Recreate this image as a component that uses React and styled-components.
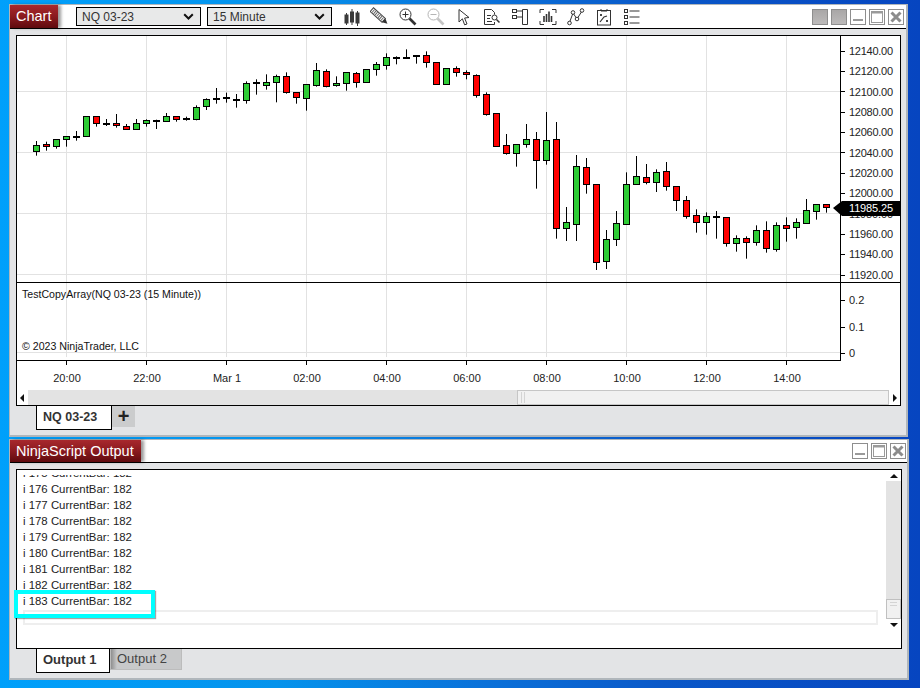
import React from "react";
import styled, { createGlobalStyle } from "styled-components";

const GlobalStyle = createGlobalStyle`
  html, body {
    margin: 0;
    padding: 0;
    width: 920px;
    height: 688px;
    overflow: hidden;
  }
  * { box-sizing: border-box; }
`;

const Desktop = styled.div`
  width: 920px;
  height: 688px;
  padding: 4px 12px 0 9px;
  display: flex;
  flex-direction: column;
  gap: 2px;
  font-family: "Liberation Sans", Arial, sans-serif;
  background: linear-gradient(90deg, #00a0fb 0%, #0593ec 30%, #0a72da 52%, #0a58c8 72%, #0645c0 100%);
`;

const Window = styled.div`
  height: ${(p) => p.$height}px;
  margin-right: ${(p) => p.$overhang || 0}px;
  border: 1px solid #b0b6bb;
  border-bottom-width: 2px;
  border-right-width: 2px;
  background: #e3e4e6;
  display: flex;
  flex-direction: column;
`;

const TitleBar = styled.div`
  height: ${(p) => p.$height}px;
  flex: none;
  background: #fff;
  border-bottom: 1px solid #000;
  display: flex;
  align-items: center;
`;

const TitleTab = styled.div`
  width: ${(p) => p.$width}px;
  height: 100%;
  flex: none;
  padding-left: 6px;
  color: #fff;
  font-size: 14.5px;
  line-height: 22px;
  white-space: nowrap;
  background: linear-gradient(180deg, #a8282d 0%, #8a1a1f 50%, #5f0a0e 100%);
  box-shadow: 3px 0 3px rgba(0, 0, 0, 0.4);
`;

const Dropdown = styled.div`
  width: 125px;
  height: 19px;
  margin-left: ${(p) => p.$gap}px;
  padding: 0 6px 0 5px;
  border: 1px solid #000;
  background: #e8e9e9;
  color: #333;
  font-size: 12px;
  display: flex;
  align-items: center;
  justify-content: space-between;
`;

const Toolbar = styled.div`
  margin-left: 6px;
  display: flex;
`;

const ToolButton = styled.div`
  width: 28px;
  height: 23px;
  display: flex;
  align-items: center;
  justify-content: center;
`;

const WindowButtons = styled.div`
  margin-left: auto;
  padding-right: ${(p) => p.$right}px;
  display: flex;
  gap: 3px;
`;

const WindowButton = styled.div`
  width: 16px;
  height: 16px;
  border: 1px solid #8e8e8e;
  background: ${(p) => (p.$filled ? "linear-gradient(180deg, #a9a7a7, #bcbaba)" : "#fff")};
  display: flex;
  align-items: center;
  justify-content: center;
`;

const Content = styled.div`
  flex: 1;
  min-height: 0;
  padding: 6px 5px 0 6px;
  display: flex;
  flex-direction: column;
`;

const ChartFrame = styled.div`
  width: 885px;
  height: 371px;
  flex: none;
  border: 1px solid #000;
  background: #fff;
  display: flex;
  flex-direction: column;
`;

const ChartSvg = styled.svg`
  display: block;
  width: 883px;
  height: 354px;
  flex: none;
  font-family: "Liberation Sans", Arial, sans-serif;
`;

const HScroll = styled.div`
  height: 15px;
  flex: 1;
  display: flex;
  background: #e3e3e3;
`;

const ArrowButton = styled.div`
  width: 11px;
  flex: none;
  background: #fff;
  display: flex;
  align-items: center;
  justify-content: center;
`;

const HTrack = styled.div`
  width: ${(p) => p.$width}px;
  flex: none;
`;

const HThumb = styled.div`
  flex: 1;
  border: 1px solid #c6c6c6;
  background: #f1f1f1;
  padding-left: 3px;
  display: flex;
  align-items: center;
  gap: 1px;
`;

const GripV = styled.span`
  width: 1px;
  height: 11px;
  background: #d4d4d4;
  margin-right: 1px;
`;

const TabRow = styled.div`
  padding-left: 20px;
  display: flex;
  align-items: flex-start;
`;

const Tab = styled.div`
  width: ${(p) => p.$width}px;
  height: 24px;
  padding-left: 6px;
  background: #fff;
  border: 1px solid #000;
  border-top: none;
  color: #333;
  font-size: ${(p) => p.$size}px;
  font-weight: bold;
  line-height: 22px;
  white-space: nowrap;
`;

const AddTab = styled.div`
  width: 23px;
  height: 21px;
  background: #cbcccd;
  color: #222;
  font-size: 20px;
  font-weight: bold;
  line-height: 20px;
  text-align: center;
`;

const SideTab = styled.div`
  width: 72px;
  height: 21px;
  padding-left: 6px;
  background: linear-gradient(90deg, #8f8f8f 0, #c8c9ca 6px);
  border: 1px solid #bcbcbc;
  border-top: none;
  color: #444;
  font-size: 13px;
  line-height: 20px;
`;

const OutputFrame = styled.div`
  position: relative;
  width: 886px;
  height: 180px;
  flex: none;
  border: 1px solid #000;
  background: #fff;
  display: flex;
`;

const OutputBody = styled.div`
  flex: 1;
  min-width: 0;
  padding: 5px 8px 0 6px;
`;

const OutputLines = styled.div`
  height: 134px;
  overflow: hidden;
  display: flex;
  flex-direction: column;
  justify-content: flex-end;
`;

const OutputLine = styled.div`
  flex: none;
  height: 16px;
  line-height: 16px;
  font-size: 11.4px;
  color: #222;
  white-space: nowrap;
`;

const InputRow = styled.div`
  height: 15px;
  margin-top: 1px;
  border: 2px solid #eeeeee;
  background: #fff;
`;

const VScroll = styled.div`
  width: 15px;
  height: 161px;
  flex: none;
  background: #e3e3e3;
  display: flex;
  flex-direction: column;
`;

const VArrow = styled.div`
  height: ${(p) => p.$height}px;
  flex: none;
  background: #fff;
  display: flex;
  align-items: center;
  justify-content: center;
`;

const VThumb = styled.div`
  height: 20px;
  margin-top: auto;
  flex: none;
  border: 1px solid #c0c0c0;
  background: #f1f1f1;
  padding: 2px 3px 0;
`;

const GripH = styled.div`
  height: 1px;
  margin-bottom: 2px;
  background: #d4d4d4;
`;

const Highlight = styled.div`
  position: absolute;
  left: -3px;
  top: 120px;
  width: 141px;
  height: 28px;
  border: 4px solid #00ffff;
  box-shadow: 1px 1px 1px rgba(0, 0, 0, 0.35);
`;

// high, body top, body bottom, low, read at 3x from the reference; c = 1 up, 0 down
const CANDLES = [
  [423, 436, 452, 467, 1], [425, 433, 439, 452, 0], [418, 418, 439, 446, 1], [409, 409, 418, 440, 1],
  [393, 409, 412, 422, 1], [349, 349, 409, 409, 1], [349, 349, 370, 380, 0], [357, 370, 371, 378, 1],
  [342, 370, 376, 383, 0], [372, 379, 388, 390, 0], [357, 370, 386, 389, 1], [358, 361, 370, 380, 1],
  [359, 361, 364, 387, 1], [339, 349, 364, 364, 1], [349, 349, 358, 365, 0], [350, 355, 358, 362, 1],
  [316, 322, 358, 361, 1], [295, 298, 319, 330, 1], [264, 295, 296, 311, 1], [278, 292, 295, 308, 1],
  [282, 298, 299, 323, 1], [244, 250, 301, 311, 1], [238, 247, 250, 284, 1], [223, 247, 254, 269, 1],
  [224, 229, 247, 307, 1], [217, 229, 277, 281, 0], [277, 277, 292, 311, 0], [253, 253, 295, 332, 1],
  [189, 211, 256, 260, 1], [208, 214, 259, 262, 0], [229, 250, 256, 260, 1], [217, 217, 250, 272, 1],
  [216, 220, 247, 263, 0], [208, 208, 247, 247, 1], [186, 193, 208, 227, 1], [160, 172, 196, 209, 1],
  [169, 172, 175, 193, 1], [148, 172, 173, 176, 1], [166, 166, 169, 191, 1], [154, 166, 187, 203, 0],
  [187, 187, 253, 253, 0], [205, 205, 253, 253, 1], [199, 205, 217, 230, 0], [211, 217, 223, 238, 0],
  [223, 226, 284, 293, 0], [277, 283, 341, 347, 0], [340, 340, 437, 440, 0], [402, 436, 458, 464, 0],
  [433, 433, 458, 500, 1], [372, 418, 433, 443, 1], [396, 418, 481, 566, 0], [336, 421, 481, 494, 1],
  [366, 418, 683, 716, 0], [621, 667, 683, 723, 1], [465, 499, 671, 723, 1], [474, 502, 553, 581, 0],
  [553, 553, 785, 810, 0], [690, 718, 782, 807, 1], [633, 670, 718, 738, 1], [517, 553, 671, 671, 1],
  [468, 529, 553, 550, 1], [492, 532, 547, 553, 0], [508, 517, 547, 576, 1], [486, 514, 559, 572, 0],
  [559, 559, 601, 633, 0], [588, 601, 649, 656, 0], [628, 646, 667, 698, 0], [637, 649, 667, 704, 1],
  [633, 649, 652, 716, 1], [652, 652, 730, 740, 0], [706, 715, 730, 755, 1], [709, 715, 727, 776, 0],
  [676, 691, 727, 737, 1], [664, 691, 743, 758, 0], [667, 676, 746, 755, 1], [652, 676, 685, 725, 0],
  [655, 667, 682, 716, 1], [597, 631, 670, 670, 1], [613, 613, 634, 659, 1], [613, 613, 622, 638, 0],
];

const VERTICAL_GRID = [66.5, 146.5, 226.5, 306.5, 386.5, 466.5, 546.5, 626.5, 706.5, 786.5];
const TIME_LABELS = ["20:00", "22:00", "Mar 1", "02:00", "04:00", "06:00", "08:00", "10:00", "12:00", "14:00"];
const PRICE_LABELS = [
  ["12140.00", 51], ["12120.00", 71], ["12100.00", 91.5], ["12080.00", 112], ["12060.00", 132],
  ["12040.00", 152.5], ["12020.00", 173], ["12000.00", 193], ["11980.00", 213.5], ["11960.00", 234],
  ["11940.00", 254], ["11920.00", 275],
];
const INDICATOR_LABELS = [["0.2", 300], ["0.1", 327], ["0", 353]];
const GRID_COLOR = "#e2e2e2";
const LINES = [175, 176, 177, 178, 179, 180, 181, 182, 183];

function snap(v) {
  return Math.round(v / 3) + 0.5;
}

function Candle({ data, index }) {
  const [high, top, bottom, low, up] = data;
  const x = 36.5 + index * 10;
  const bodyTop = snap(top);
  const bodyBottom = Math.max(snap(bottom), bodyTop + 1);
  return (
    <g>
      <line x1={x} x2={x} y1={high / 3} y2={low / 3} stroke="#000" />
      <rect
        x={x - 3}
        y={bodyTop}
        width={6}
        height={bodyBottom - bodyTop}
        fill={up ? "#2ecc35" : "#ff0000"}
        stroke="#000"
      />
    </g>
  );
}

function PriceChart() {
  return (
    <ChartSvg viewBox="17 36 883 354">
      {VERTICAL_GRID.map((x) => (
        <line key={x} x1={x} x2={x} y1={36} y2={357} stroke={GRID_COLOR} />
      ))}
      {[91.5, 152.5, 213.5, 274.5, 352.5].map((y) => (
        <line key={y} x1={17} x2={840} y1={y} y2={y} stroke={GRID_COLOR} />
      ))}
      {CANDLES.map((c, i) => (
        <Candle key={i} data={c} index={i} />
      ))}
      <line x1={840.5} x2={840.5} y1={36} y2={361} stroke="#000" />
      <line x1={17} x2={900} y1={282.5} y2={282.5} stroke="#000" />
      <line x1={17} x2={841} y1={360.5} y2={360.5} stroke="#000" />
      {PRICE_LABELS.concat(INDICATOR_LABELS).map(([label, y]) => (
        <g key={label}>
          <line x1={841} x2={845} y1={Math.floor(y) + 0.5} y2={Math.floor(y) + 0.5} stroke="#000" />
          <text x={849} y={y + 4} fontSize={11} textLength={label.length === 8 ? 44 : undefined} fill="#222">
            {label}
          </text>
        </g>
      ))}
      {VERTICAL_GRID.map((x, i) => (
        <g key={x}>
          <line x1={x} x2={x} y1={361} y2={365} stroke="#000" />
          <text x={x + 0.5} y={382} fontSize={11} textAnchor="middle" fill="#222">
            {TIME_LABELS[i]}
          </text>
        </g>
      ))}
      <polygon points="833,208 842,201 900,201 900,216 842,216" fill="#000" />
      <text x={849} y={212} fontSize={11} textLength={44} fill="#fff">
        11985.25
      </text>
      <text x={22} y={298} fontSize={10.6} fill="#111">
        TestCopyArray(NQ 03-23 (15 Minute))
      </text>
      <text x={22} y={350} fontSize={10.6} fill="#111">
        © 2023 NinjaTrader, LLC
      </text>
    </ChartSvg>
  );
}

function Chevron() {
  return (
    <svg width="11" height="7" viewBox="0 0 11 7">
      <path d="M1.2 1.2 L5.5 5.5 L9.8 1.2" fill="none" stroke="#111" strokeWidth="2" />
    </svg>
  );
}

function Arrow({ dir }) {
  const points = {
    left: "6,1 6,9 2,5",
    right: "3,1 3,9 7,5",
    up: "5,3 9,7 1,7",
    down: "1,3 9,3 5,7",
  };
  return (
    <svg width="10" height="10" viewBox="0 0 10 10">
      <polygon points={points[dir]} fill="#111" />
    </svg>
  );
}

function BarsIcon() {
  return (
    <svg width="18" height="20" viewBox="0 0 18 20" stroke="#3a3a3a" fill="#3a3a3a">
      <path d="M3.5 6v12M9 2v16M14.5 4v15" fill="none" />
      <rect x="2" y="8" width="3" height="8" />
      <rect x="7.5" y="5" width="3" height="10" />
      <rect x="13" y="6" width="3" height="10" />
    </svg>
  );
}

function PencilIcon() {
  return (
    <svg width="20" height="20" viewBox="0 0 20 20">
      <g transform="rotate(42 10 10)">
        <rect x="-1" y="7.5" width="16" height="5" fill="#fff" stroke="#444" />
        <path d="M1 8v4M3 8v4M5 8v4M7 8v4M9 8v4M11 8v4M13 8v4" stroke="#666" />
        <path d="M15 7.5 L20 10 L15 12.5 Z" fill="#333" />
      </g>
    </svg>
  );
}

function ZoomIcon({ color, handle, minus }) {
  return (
    <svg width="20" height="20" viewBox="0 0 20 20" fill="none">
      <circle cx="7.5" cy="7.5" r="5.5" stroke={color} />
      <path d="M4.5 7.5h6" stroke={color} />
      {!minus && <path d="M7.5 4.5v6" stroke={color} />}
      <path d="M11.5 11.5l6 6" stroke={handle} strokeWidth="2.6" />
    </svg>
  );
}

function CursorIcon() {
  return (
    <svg width="14" height="18" viewBox="0 0 14 18">
      <path d="M2 1.5 L12 9.5 L7.6 10 L10 16 L7.6 16.8 L5.4 10.8 L2 14 Z" fill="#fff" stroke="#333" />
    </svg>
  );
}

function DocSearchIcon() {
  return (
    <svg width="18" height="18" viewBox="0 0 18 18" fill="none" stroke="#333">
      <path d="M1.5 1.5h7l3 3v2M11.5 14v2.5h-10v-15" />
      <path d="M4 7.5h4M4 10.5h3M4 13.5h5" />
      <circle cx="11.5" cy="9.5" r="2.5" />
      <path d="M13.5 11.5l3 3" strokeWidth="1.5" />
    </svg>
  );
}

function PanelIcon() {
  return (
    <svg width="18" height="18" viewBox="0 0 18 18" fill="none" stroke="#333">
      <path d="M11.5 1.5h5v15h-5z" />
      <rect x="1.5" y="1.5" width="4" height="3" />
      <rect x="1.5" y="7.5" width="4" height="3" />
      <path d="M5.5 3h6M5.5 9h6" />
    </svg>
  );
}

function BracketBarsIcon() {
  return (
    <svg width="18" height="18" viewBox="0 0 18 18" fill="none" stroke="#333">
      <path d="M1 5V1.5h4M13 1.5h4V5M1 13v3.5h4M13 16.5h4V13" />
      <path d="M5 8v6M7.5 6v8M10 3.5v10.5M12.5 8v6" strokeWidth="1.6" />
    </svg>
  );
}

function NodesIcon() {
  return (
    <svg width="18" height="18" viewBox="0 0 18 18" fill="none" stroke="#333">
      <path d="M2.5 14.5 L6 5 L10 11 L15 3" />
      <circle cx="2.5" cy="15" r="1.8" fill="#fff" />
      <circle cx="6" cy="4.5" r="1.8" fill="#fff" />
      <circle cx="10" cy="11" r="1.8" fill="#fff" />
      <circle cx="15" cy="2.5" r="1.8" fill="#fff" />
    </svg>
  );
}

function DocChartIcon() {
  return (
    <svg width="16" height="18" viewBox="0 0 16 18" fill="none" stroke="#333">
      <rect x="1.5" y="2.5" width="13" height="14.5" />
      <path d="M5 1v2h6V1" />
      <path d="M4 6l2 2M6 6l-2 2M10 12l2 2M12 12l-2 2" strokeWidth="0.9" />
      <path d="M4 14 L8 9 L11 8" strokeWidth="1.2" />
    </svg>
  );
}

function ListIcon() {
  return (
    <svg width="18" height="18" viewBox="0 0 18 18" fill="none" stroke="#333">
      <rect x="1.5" y="1.5" width="3" height="3" />
      <rect x="1.5" y="7.5" width="3" height="3" />
      <rect x="1.5" y="13.5" width="3" height="3" />
      <path d="M6.5 3h10M6.5 9h10M6.5 15h10" />
    </svg>
  );
}

function MinIcon() {
  return (
    <svg width="14" height="14" viewBox="0 0 14 14">
      <rect x="2" y="9" width="10" height="2" fill="#9a9a9a" />
    </svg>
  );
}

function MaxIcon() {
  return (
    <svg width="14" height="14" viewBox="0 0 14 14" fill="none">
      <rect x="1.5" y="1.5" width="11" height="11" stroke="#9a9a9a" />
      <rect x="1" y="1" width="12" height="2.5" fill="#9a9a9a" />
    </svg>
  );
}

function CloseIcon() {
  return (
    <svg width="14" height="14" viewBox="0 0 14 14">
      <path d="M2.5 2.5l9 9M11.5 2.5l-9 9" stroke="#8c8c8c" strokeWidth="3" />
    </svg>
  );
}

function ControlButtons({ right, filled }) {
  return (
    <WindowButtons $right={right}>
      {filled && <WindowButton $filled />}
      {filled && <WindowButton $filled />}
      <WindowButton><MinIcon /></WindowButton>
      <WindowButton><MaxIcon /></WindowButton>
      <WindowButton><CloseIcon /></WindowButton>
    </WindowButtons>
  );
}

export default function App() {
  return (
    <>
      <GlobalStyle />
      <Desktop>
        <Window $height={433}>
          <TitleBar $height={24}>
            <TitleTab $width={48}>Chart</TitleTab>
            <Dropdown $gap={18}>NQ 03-23<Chevron /></Dropdown>
            <Dropdown $gap={6}>15 Minute<Chevron /></Dropdown>
            <Toolbar>
              <ToolButton><BarsIcon /></ToolButton>
              <ToolButton><PencilIcon /></ToolButton>
              <ToolButton><ZoomIcon color="#333" handle="#333" /></ToolButton>
              <ToolButton><ZoomIcon color="#b5b5b5" handle="#c4c4c4" minus /></ToolButton>
              <ToolButton><CursorIcon /></ToolButton>
              <ToolButton><DocSearchIcon /></ToolButton>
              <ToolButton><PanelIcon /></ToolButton>
              <ToolButton><BracketBarsIcon /></ToolButton>
              <ToolButton><NodesIcon /></ToolButton>
              <ToolButton><DocChartIcon /></ToolButton>
              <ToolButton><ListIcon /></ToolButton>
            </Toolbar>
            <ControlButtons right={2} filled />
          </TitleBar>
          <Content>
            <ChartFrame>
              <PriceChart />
              <HScroll>
                <ArrowButton><Arrow dir="left" /></ArrowButton>
                <HTrack $width={489} />
                <HThumb><GripV /><GripV /></HThumb>
                <ArrowButton><Arrow dir="right" /></ArrowButton>
              </HScroll>
            </ChartFrame>
            <TabRow>
              <Tab $width={76} $size={12.5}>NQ 03-23</Tab>
              <AddTab>+</AddTab>
            </TabRow>
          </Content>
        </Window>
        <Window $height={241} $overhang={-1}>
          <TitleBar $height={23}>
            <TitleTab $width={131}>NinjaScript Output</TitleTab>
            <ControlButtons right={1} />
          </TitleBar>
          <Content>
            <OutputFrame>
              <OutputBody>
                <OutputLines>
                  {LINES.map((n) => (
                    <OutputLine key={n}>i {n} CurrentBar: 182</OutputLine>
                  ))}
                </OutputLines>
                <InputRow />
              </OutputBody>
              <VScroll>
                <VArrow $height={11}><Arrow dir="up" /></VArrow>
                <VThumb><GripH /><GripH /></VThumb>
                <VArrow $height={12}><Arrow dir="down" /></VArrow>
              </VScroll>
              <Highlight />
            </OutputFrame>
            <TabRow>
              <Tab $width={74} $size={13}>Output 1</Tab>
              <SideTab>Output 2</SideTab>
            </TabRow>
          </Content>
        </Window>
      </Desktop>
    </>
  );
}
